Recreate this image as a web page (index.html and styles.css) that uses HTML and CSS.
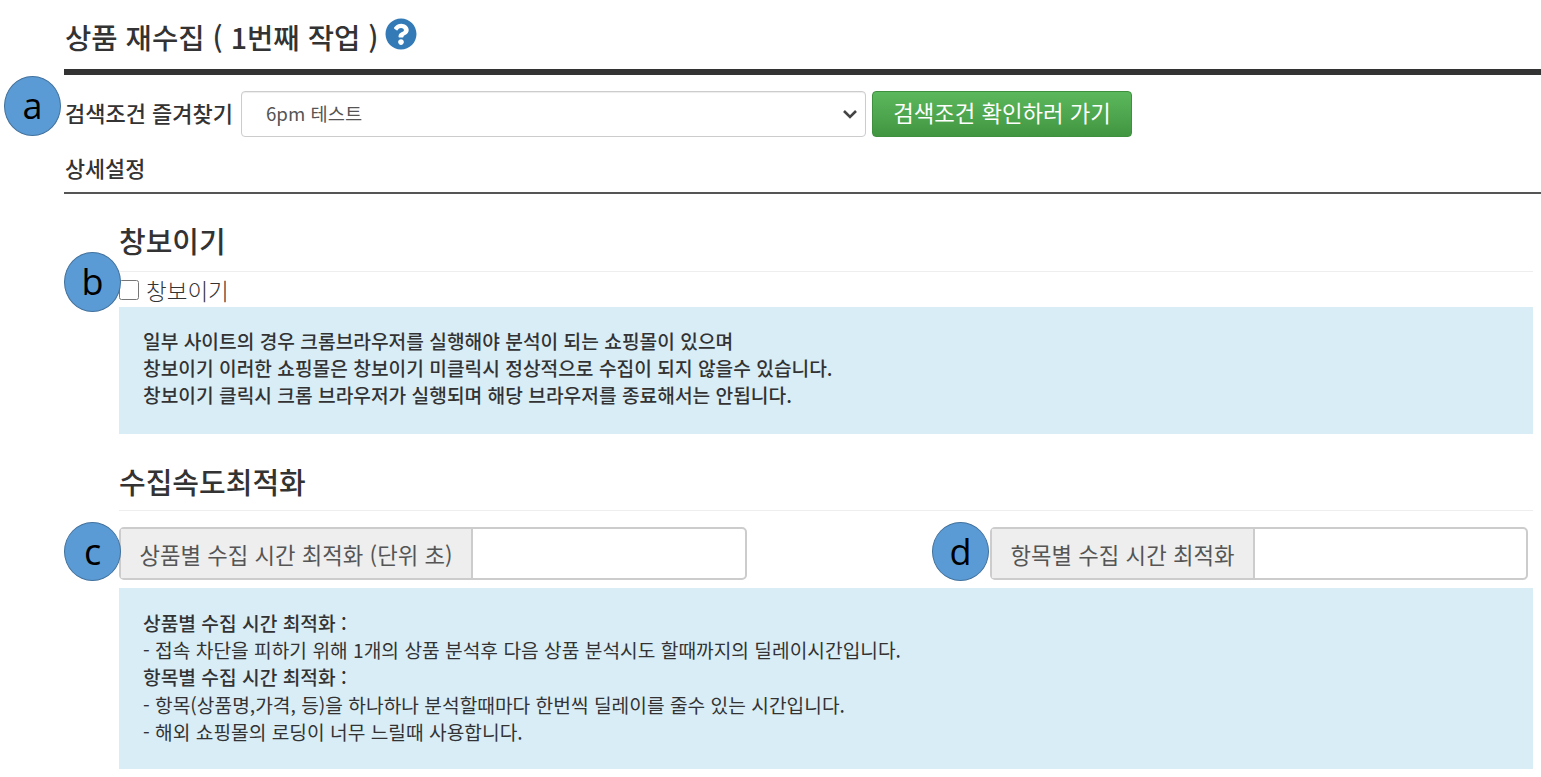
FILE: index.html
```html
<!DOCTYPE html>
<html lang="ko">
<head>
  <meta charset="UTF-8">
  <title>상품 재수집</title>
  <link rel="stylesheet" href="styles.css">
</head>
<body>
  <div class="page">
    <div class="page-title">
      <h1>상품 재수집 ( 1번째 작업 )</h1>
      <svg class="help-icon" viewBox="0 0 512 512">
        <path fill="#337ab7" d="M504 256c0 136.997-111.043 248-248 248S8 392.997 8 256C8 119.083 119.043 8 256 8s248 111.083 248 248zM262.655 90c-54.497 0-89.255 22.957-116.549 63.758-3.536 5.286-2.353 12.415 2.715 16.258l34.699 26.31c5.205 3.947 12.621 3.008 16.665-2.122 17.864-22.658 30.113-35.797 57.303-35.797 20.429 0 45.698 13.148 45.698 32.958 0 14.976-12.363 22.667-32.534 33.976C247.128 238.528 216 254.941 216 296v4c0 6.627 5.373 12 12 12h56c6.627 0 12-5.373 12-12v-1.333c0-28.462 83.186-29.647 83.186-106.667 0-58.002-60.165-102-116.531-102zM256 338c-25.365 0-46 20.635-46 46 0 25.364 20.635 46 46 46s46-20.636 46-46c0-25.365-20.635-46-46-46z"/>
      </svg>
    </div>

    <div class="favorite-row">
      <span class="badge badge-a">a</span>
      <label class="favorite-label" for="favorite">검색조건 즐겨찾기</label>
      <div class="select-box" id="favorite">
        <span class="select-text">6pm 테스트</span>
        <svg class="chevron" viewBox="0 0 16 10"><path d="M2 2l6 6 6-6" fill="none" stroke="#444" stroke-width="2.6"/></svg>
      </div>
      <button class="btn-green">검색조건 확인하러 가기</button>
    </div>

    <h2 class="sub-title">상세설정</h2>

    <section class="section">
      <h3>창보이기</h3>
      <div class="check-row">
        <span class="badge badge-b">b</span>
        <input type="checkbox" id="showWindow">
        <label for="showWindow">창보이기</label>
      </div>
      <div class="note note-first">
        일부 사이트의 경우 크롬브라우저를 실행해야 분석이 되는 쇼핑몰이 있으며<br>
        창보이기 이러한 쇼핑몰은 창보이기 미클릭시 정상적으로 수집이 되지 않을수 있습니다.<br>
        창보이기 클릭시 크롬 브라우저가 실행되며 해당 브라우저를 종료해서는 안됩니다.
      </div>
    </section>

    <section class="section section-speed">
      <h3>수집속도최적화</h3>
      <div class="speed-row">
        <div class="input-group group-c">
          <span class="badge badge-c">c</span>
          <span class="addon">상품별 수집 시간 최적화 (단위 초)</span>
          <input type="text">
        </div>
        <div class="input-group group-d">
          <span class="badge badge-d">d</span>
          <span class="addon">항목별 수집 시간 최적화</span>
          <input type="text">
        </div>
      </div>
      <div class="note note-second">
        <b>상품별 수집 시간 최적화 :</b><br>
        - 접속 차단을 피하기 위해 1개의 상품 분석후 다음 상품 분석시도 할때까지의 딜레이시간입니다.<br>
        <b>항목별 수집 시간 최적화 :</b><br>
        - 항목(상품명,가격, 등)을 하나하나 분석할때마다 한번씩 딜레이를 줄수 있는 시간입니다.<br>
        - 해외 쇼핑몰의 로딩이 너무 느릴때 사용합니다.
      </div>
    </section>
  </div>
</body>
</html>
```

FILE: styles.css
```css
* {
  box-sizing: border-box;
}

html, body {
  height: 777px;
  overflow: hidden;
}

body {
  margin: 0;
  background: #fff;
  color: #333;
  font-family: "Noto Sans CJK KR", "Noto Sans", sans-serif;
}

.page {
  padding-left: 64px;
}

.page-title {
  display: flex;
  align-items: flex-start;
  gap: 7px;
  height: 75px;
  border-bottom: 6px solid #333;
}

.page-title h1 {
  margin: 0;
  padding: 18px 0 0 1px;
  font-size: 28.6px;
  line-height: 38px;
  font-weight: 500;
}

.help-icon {
  width: 32px;
  height: 32px;
  margin-top: 18px;
}

.favorite-row {
  position: relative;
  display: flex;
  align-items: center;
  height: 46px;
  margin-top: 16px;
}

.favorite-label {
  width: 177px;
  padding: 0 0 5px 1px;
  font-size: 22px;
  font-weight: 500;
}

.select-box {
  display: flex;
  align-items: center;
  justify-content: space-between;
  width: 625px;
  height: 46px;
  padding: 0 7px 0 24px;
  border: 1px solid #ccc;
  border-radius: 4px;
  font-size: 18.7px;
  color: #555;
  box-shadow: inset 0 1px 1px rgba(0, 0, 0, .075);
}

.select-text {
  padding-bottom: 3px;
}

.chevron {
  width: 16px;
  height: 10px;
}

.btn-green {
  width: 260px;
  height: 46px;
  margin-left: 6px;
  padding: 0 0 4px;
  border: 1px solid #3e8f3e;
  border-radius: 4px;
  background: linear-gradient(#5cb85c, #419641);
  color: #fff;
  font-family: inherit;
  font-size: 22.3px;
}

.sub-title {
  margin: 0;
  height: 57px;
  padding: 17px 0 0 1px;
  border-bottom: 2px solid #555;
  font-size: 21.8px;
  line-height: 28px;
  font-weight: 500;
}

.section {
  margin: 0 8px 0 55px;
}

.section h3 {
  margin: 0;
  height: 78px;
  padding-top: 26px;
  border-bottom: 1px solid #eee;
  font-size: 29px;
  line-height: 40px;
  font-weight: 500;
}

.check-row {
  position: relative;
  display: flex;
  align-items: center;
  height: 35px;
}

.check-row input {
  width: 20px;
  height: 20px;
  margin: 0 7px 0 0;
}

.check-row label {
  font-size: 22.5px;
  font-weight: 300;
}

.note {
  background: #d9edf7;
  padding-left: 24px;
  font-size: 19.2px;
  line-height: 27.2px;
  color: #333;
}

.note-first {
  height: 127px;
  padding-top: 21px;
  font-weight: 500;
}

.section-speed h3 {
  height: 77px;
  padding-top: 27px;
}

.speed-row {
  display: flex;
  justify-content: space-between;
  padding: 16px 5px 8px 0;
}

.input-group {
  position: relative;
  display: flex;
  height: 53px;
  border: 2px solid #ccc;
  border-radius: 5px;
}

.group-c {
  width: 628px;
}

.group-d {
  width: 538px;
}

.addon {
  display: flex;
  align-items: center;
  justify-content: center;
  background: #eee;
  border-right: 2px solid #ccc;
  color: #555;
  font-size: 22.3px;
  white-space: nowrap;
}

.group-c .addon {
  width: 352px;
}

.group-d .addon {
  width: 263px;
}

.input-group input {
  flex: 1;
  min-width: 0;
  border: 0;
  outline: 0;
  background: transparent;
}

.note-second {
  height: 181px;
  padding-top: 22px;
}

.note-second b {
  font-weight: 500;
}

.badge {
  position: absolute;
  display: flex;
  align-items: center;
  justify-content: center;
  width: 57px;
  height: 60px;
  border: 1.5px solid #41719c;
  border-radius: 50%;
  background: #5b9bd5;
  color: #000;
  font-family: "Open Sans", sans-serif;
  font-size: 36px;
  line-height: 1;
}

.badge-a {
  left: -60px;
  top: -15px;
}

.badge-b {
  left: -55px;
  top: -20px;
}

.badge-c {
  left: -57px;
  top: -7px;
  height: 59px;
}

.badge-d {
  left: -60px;
  top: -7px;
  height: 59px;
}
```
